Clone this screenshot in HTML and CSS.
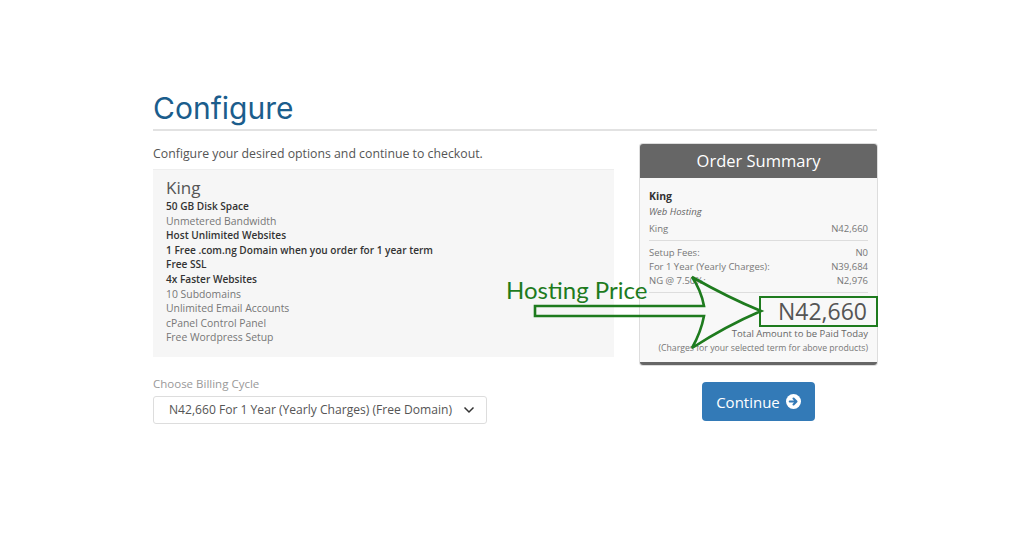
FILE: index.html
```html
<!DOCTYPE html>
<html>
<head>
    <title>Configure</title>
    <meta name="viewport" content="width=device-width, initial-scale=1.0">
    <link rel="stylesheet" href="styles.css">
</head>
<body>
    <div class="page">
        <h1>Configure</h1>
        <div class="rule"></div>

        <div class="row">
            <div class="main-col">
                <p class="intro">Configure your desired options and continue to checkout.</p>

                <div class="product-box">
                    <div class="product-name">King</div>
                    <div class="feature strong">50 GB Disk Space</div>
                    <div class="feature">Unmetered Bandwidth</div>
                    <div class="feature strong">Host Unlimited Websites</div>
                    <div class="feature strong">1 Free .com.ng Domain when you order for 1 year term</div>
                    <div class="feature strong">Free SSL</div>
                    <div class="feature strong">4x Faster Websites</div>
                    <div class="feature">10 Subdomains</div>
                    <div class="feature">Unlimited Email Accounts</div>
                    <div class="feature">cPanel Control Panel</div>
                    <div class="feature">Free Wordpress Setup</div>
                </div>

                <label class="field-label" for="billingcycle">Choose Billing Cycle</label>
                <div class="select-box" id="billingcycle">
                    <span>N42,660 For 1 Year (Yearly Charges) (Free Domain)</span>
                    <svg class="chevron" width="12" height="8" viewBox="0 0 12 8">
                        <path d="M1.5 1.5 L6 6 L10.5 1.5" fill="none" stroke="#333" stroke-width="1.5"/>
                    </svg>
                </div>
            </div>

            <div class="side-col">
                <div class="summary">
                    <div class="summary-head">Order Summary</div>
                    <div class="summary-body">
                        <div class="item-name">King</div>
                        <div class="item-group">Web Hosting</div>
                        <div class="line"><span>King</span><span>N42,660</span></div>
                        <div class="divider"></div>
                        <div class="line"><span>Setup Fees:</span><span>N0</span></div>
                        <div class="line"><span>For 1 Year (Yearly Charges):</span><span>N39,684</span></div>
                        <div class="line"><span>NG @ 7.50%:</span><span>N2,976</span></div>
                        <div class="divider last"></div>
                        <div class="total"><span class="total-amount">N42,660</span></div>
                        <div class="total-label">Total Amount to be Paid Today</div>
                        <div class="total-note">(Charges for your selected term for above products)</div>
                    </div>
                </div>
                <button type="button" class="btn-continue">
                    Continue
                    <svg width="15" height="15" viewBox="0 0 16 16">
                        <circle cx="8" cy="8" r="8" fill="#fff"/>
                        <path d="M4 8 H11 M8 4.8 L11.2 8 L8 11.2" fill="none" stroke="#337ab7" stroke-width="2.2" stroke-linecap="round" stroke-linejoin="round"/>
                    </svg>
                </button>
            </div>
        </div>

        <div class="note-text">Hosting Price</div>
        <svg class="note-arrow" width="235" height="85" viewBox="0 0 235 85">
            <path d="M2 36 L171 36 Q168 20 159 7 Q196 28 228 41 Q193 56 159 78 Q168 62 171 46 L2 46 Z" fill="none" stroke="#1e7b1e" stroke-width="2.6" stroke-linejoin="miter"/>
        </svg>
    </div>
</body>
</html>
```

FILE: styles.css
```css
body {
    margin: 0;
    font-family: "Open Sans", Arial, sans-serif;
    color: #555;
    background: #fff;
}

.page {
    position: relative;
    width: 724px;
    margin-left: 153px;
    padding-top: 88px;
}

h1 {
    margin: 0;
    font-family: Inter, "Open Sans", sans-serif;
    font-weight: 400;
    font-size: 30px;
    line-height: 40px;
    color: #1b5d8c;
}

.rule {
    height: 2px;
    margin-top: 1px;
    background: #e2e2e2;
}

.row {
    display: flex;
    gap: 26px;
    margin-top: 13px;
}

.main-col {
    width: 461px;
}

.side-col {
    width: 237px;
    display: flex;
    flex-direction: column;
    align-items: center;
}

.intro {
    margin: 1px 0 0;
    font-size: 12.3px;
    line-height: 18px;
    color: #555;
}

.product-box {
    margin-top: 6px;
    padding: 8px 13px 12px;
    background: #f6f6f6;
    border-top: 1px solid #eee;
}

.product-name {
    font-size: 17px;
    line-height: 20px;
    color: #555;
    margin-bottom: 1px;
}

.feature {
    font-size: 10.4px;
    line-height: 14.6px;
    color: #777;
}

.feature.strong {
    font-size: 10.1px;
    font-weight: 600;
    color: #333;
}

.field-label {
    display: block;
    margin-top: 19px;
    font-size: 11.5px;
    line-height: 16px;
    color: #999;
}

.select-box {
    display: flex;
    align-items: center;
    justify-content: space-between;
    width: 334px;
    height: 28px;
    margin-top: 4px;
    padding: 0 11px 0 15px;
    box-sizing: border-box;
    border: 1px solid #ddd;
    border-radius: 3px;
    font-size: 12.1px;
    color: #555;
}

.summary {
    width: 100%;
    border-radius: 3px;
    border-bottom: 3px solid #666;
    box-shadow: 0 0 0 1px #ddd;
}

.summary-head {
    height: 34px;
    line-height: 34px;
    text-align: center;
    background: #666;
    color: #fff;
    font-size: 16.5px;
    border-radius: 3px 3px 0 0;
}

.summary-body {
    background: #f8f8f8;
    padding: 11px 9px 7px;
    font-size: 9.5px;
    color: #777;
}

.item-name {
    font-weight: 700;
    font-size: 10.5px;
    color: #333;
    line-height: 15px;
}

.item-group {
    font-style: italic;
    line-height: 15px;
    color: #666;
}

.line {
    display: flex;
    justify-content: space-between;
    line-height: 14px;
}

.item-group + .line {
    margin-top: 3px;
}

.divider {
    height: 1px;
    background: #ddd;
    margin: 4px 0 5px;
}

.divider.last {
    margin-bottom: 3px;
}

.total {
    text-align: right;
    margin: 0 -10px 0 0;
}

.total-amount {
    display: inline-block;
    padding: 0 9px 0 17px;
    font-size: 23px;
    line-height: 27px;
    color: #555;
    border: 2px solid #1e7b1e;
}

.total-label {
    text-align: right;
    line-height: 14px;
    color: #666;
}

.total-note {
    text-align: right;
    font-size: 8.7px;
    line-height: 14px;
}

.btn-continue {
    display: flex;
    align-items: center;
    gap: 6px;
    margin-top: 17px;
    padding: 0 14px;
    height: 39px;
    border: none;
    border-radius: 4px;
    background: #337ab7;
    color: #fff;
    font-family: "Open Sans", Arial, sans-serif;
    font-size: 15px;
    cursor: pointer;
}

.note-text {
    position: absolute;
    left: 353px;
    top: 275px;
    font-family: Lato, "Open Sans", sans-serif;
    font-size: 24px;
    line-height: 30px;
    color: #1e7b1e;
}

.note-arrow {
    position: absolute;
    left: 380px;
    top: 270px;
}
```
